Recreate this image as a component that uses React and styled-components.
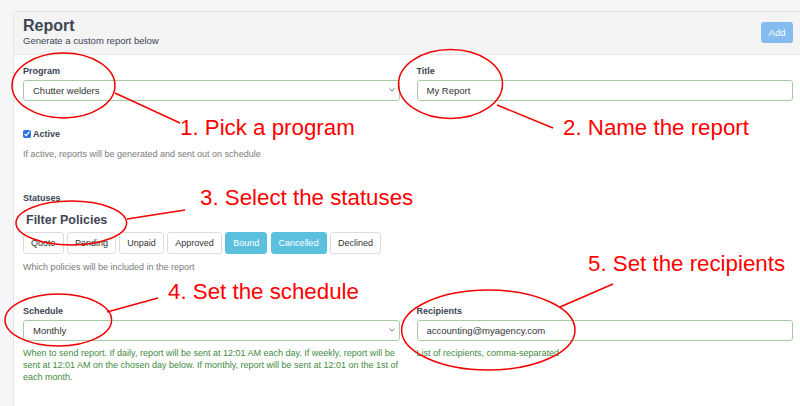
import React from 'react';
import styled, { createGlobalStyle } from 'styled-components';

const GlobalStyle = createGlobalStyle`
  html, body {
    margin: 0;
    padding: 0;
  }
  body {
    background: #f5f6f8;
    font-family: "Liberation Sans", Arial, Helvetica, sans-serif;
    overflow: hidden;
  }
`;

const Page = styled.div`
  position: relative;
  width: 800px;
  height: 406px;
  overflow: hidden;
  box-sizing: border-box;
  padding: 11px 0 0 13px;
`;

const Card = styled.div`
  width: 790px;
  height: 420px;
  box-sizing: border-box;
  background: #fff;
  border: 1px solid #e3e4e6;
  border-radius: 3px 3px 0 0;
`;

const CardHeader = styled.div`
  display: flex;
  justify-content: space-between;
  align-items: flex-start;
  height: 43px;
  box-sizing: border-box;
  padding: 4px 9px 0 9px;
  background: #f4f4f4;
  border-bottom: 1px solid #e6e6e6;
`;

const Title = styled.h1`
  margin: 0;
  font-size: 16px;
  line-height: 20px;
  font-weight: 700;
  color: #3d4554;
`;

const Subtitle = styled.div`
  margin-top: -1px;
  font-size: 9.5px;
  line-height: 12px;
  color: #3d4554;
`;

const AddButton = styled.button`
  margin-top: 6px;
  width: 32px;
  height: 21px;
  padding: 0;
  border: none;
  border-radius: 3px;
  background: #85bcef;
  color: #fff;
  font-family: inherit;
  font-size: 9.5px;
`;

const CardBody = styled.div`
  padding: 10px 9px 0 9px;
`;

const Row = styled.div`
  display: grid;
  grid-template-columns: 1fr 1fr;
  column-gap: 17px;
  margin-top: ${p => p.$top || 0}px;
`;

const Label = styled.label`
  display: block;
  margin-top: ${p => p.$top || 0}px;
  margin-bottom: ${p => (p.$flush ? 0 : 3)}px;
  font-size: 9px;
  line-height: 12px;
  font-weight: 700;
  color: #3b4354;
`;

const controlStyle = `
  display: block;
  width: 100%;
  height: 21px;
  box-sizing: border-box;
  margin: 0;
  padding: 0 9px;
  border: 1px solid #a7cba6;
  border-radius: 3px;
  background: #fff;
  color: #333;
  font-family: inherit;
  font-size: 9.5px;
  outline: none;
`;

const TextInput = styled.input`
  ${controlStyle}
`;

const SelectWrap = styled.div`
  position: relative;
`;

const Select = styled.select`
  ${controlStyle}
  appearance: none;
  -webkit-appearance: none;
`;

const Chevron = styled.svg`
  position: absolute;
  right: 5px;
  top: 8px;
  width: 6px;
  height: 4px;
  pointer-events: none;
`;

const CheckRow = styled.label`
  display: flex;
  align-items: center;
  gap: 2px;
  margin-top: 27px;
  height: 12px;
  font-size: 9px;
  font-weight: 700;
  color: #3b4354;
`;

const Checkbox = styled.input`
  width: 8px;
  height: 8px;
  margin: 0;
  accent-color: #2b6fe0;
`;

const Help = styled.div`
  margin-top: ${p => p.$top || 0}px;
  font-size: 9px;
  line-height: 12px;
  color: ${p => (p.$valid ? '#3f8a3f' : '#7a7a7a')};
`;

const Legend = styled.div`
  margin-top: 8px;
  padding-left: 3px;
  font-size: 12.5px;
  line-height: 16px;
  font-weight: 700;
  color: #3d4554;
`;

const ButtonGroup = styled.div`
  display: flex;
  gap: 3.4px;
  margin-top: 4px;
`;

const StatusButton = styled.button`
  height: 22px;
  padding: 0 7px;
  border: 1px solid ${p => (p.$active ? '#5bc0de' : '#dcdcdc')};
  border-radius: 3px;
  background: ${p => (p.$active ? '#5bc0de' : '#fff')};
  color: ${p => (p.$active ? '#fff' : '#333')};
  font-family: inherit;
  font-size: 9px;
`;

const Overlay = styled.svg`
  position: absolute;
  left: 0;
  top: 0;
  width: 800px;
  height: 406px;
  pointer-events: none;
`;

const Callout = styled.span`
  position: absolute;
  left: ${p => p.$x}px;
  top: ${p => p.$y}px;
  font-family: "Liberation Sans", Arial, sans-serif;
  font-size: 22.3px;
  line-height: 22px;
  color: #ff0000;
  white-space: nowrap;
`;

const statuses = [
  { name: 'Quote' },
  { name: 'Pending' },
  { name: 'Unpaid' },
  { name: 'Approved' },
  { name: 'Bound', active: true },
  { name: 'Cancelled', active: true },
  { name: 'Declined' },
];

const ellipses = [
  { cx: 63.5, cy: 85.5, rx: 51.5, ry: 32.5 },
  { cx: 450.5, cy: 84, rx: 52, ry: 34.5 },
  { cx: 71.3, cy: 223, rx: 55.3, ry: 22 },
  { cx: 58.3, cy: 320, rx: 53.3, ry: 26 },
  { cx: 488.3, cy: 330, rx: 86.7, ry: 40 },
];

const pointers = [
  [115, 93, 180, 123],
  [497, 105, 553, 128],
  [127, 219, 185, 210],
  [107, 312, 158, 298],
  [560, 307, 613, 284],
];

const callouts = [
  { text: '1. Pick a program', x: 180, y: 117 },
  { text: '2. Name the report', x: 563, y: 117 },
  { text: '3. Select the statuses', x: 200, y: 187 },
  { text: '4. Set the schedule', x: 168, y: 281 },
  { text: '5. Set the recipients', x: 588, y: 253 },
];

const ChevronIcon = () => (
  <Chevron viewBox="0 0 6 4">
    <path d="M0.5 0.5 L3 3.2 L5.5 0.5" fill="none" stroke="#666" strokeWidth="0.9" />
  </Chevron>
);

export default function App() {
  return (
    <Page>
      <GlobalStyle />
      <Card>
        <CardHeader>
          <div>
            <Title>Report</Title>
            <Subtitle>Generate a custom report below</Subtitle>
          </div>
          <AddButton>Add</AddButton>
        </CardHeader>
        <CardBody>
          <Row>
            <div>
              <Label>Program</Label>
              <SelectWrap>
                <Select defaultValue="chutter">
                  <option value="chutter">Chutter welders</option>
                </Select>
                <ChevronIcon />
              </SelectWrap>
            </div>
            <div>
              <Label>Title</Label>
              <TextInput defaultValue="My Report" />
            </div>
          </Row>

          <CheckRow>
            <Checkbox type="checkbox" defaultChecked />
            Active
          </CheckRow>
          <Help $top={8}>If active, reports will be generated and sent out on schedule</Help>

          <Label $top={32} $flush>Statuses</Label>
          <Legend>Filter Policies</Legend>
          <ButtonGroup>
            {statuses.map(s => (
              <StatusButton key={s.name} $active={s.active}>{s.name}</StatusButton>
            ))}
          </ButtonGroup>
          <Help $top={7}>Which policies will be included in the report</Help>

          <Row $top={32}>
            <div>
              <Label>Schedule</Label>
              <SelectWrap>
                <Select defaultValue="monthly">
                  <option value="monthly">Monthly</option>
                </Select>
                <ChevronIcon />
              </SelectWrap>
              <Help $top={6} $valid>
                When to send report. If daily, report will be sent at 12:01 AM each day. If weekly, report will be
                sent at 12:01 AM on the chosen day below. If monthly, report will be sent at 12:01 on the 1st of
                each month.
              </Help>
            </div>
            <div>
              <Label>Recipients</Label>
              <TextInput defaultValue="accounting@myagency.com" />
              <Help $top={6} $valid>List of recipients, comma-separated</Help>
            </div>
          </Row>
        </CardBody>
      </Card>

      <Overlay viewBox="0 0 800 406">
        {ellipses.map((e, i) => (
          <ellipse key={i} {...e} fill="none" stroke="#f20000" strokeWidth="1.5" />
        ))}
        {pointers.map(([x1, y1, x2, y2], i) => (
          <line key={i} x1={x1} y1={y1} x2={x2} y2={y2} stroke="#f20000" strokeWidth="1.5" />
        ))}
      </Overlay>
      {callouts.map(c => (
        <Callout key={c.text} $x={c.x} $y={c.y}>{c.text}</Callout>
      ))}
    </Page>
  );
}
